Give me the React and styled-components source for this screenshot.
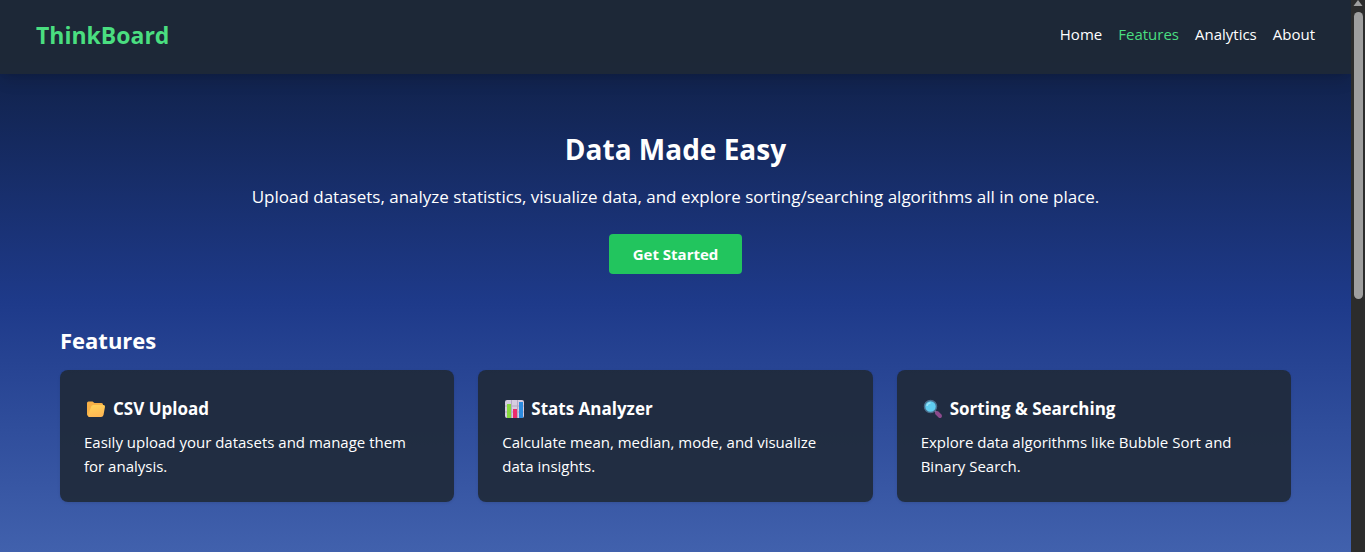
import React from "react";
import styled, { createGlobalStyle } from "styled-components";

const GlobalStyle = createGlobalStyle`
  *, *::before, *::after { box-sizing: border-box; }
  html, body { margin: 0; height: 100%; overflow: hidden; }
  #root { height: 100%; }
  body {
    font-family: "Segoe UI", "Open Sans", "Noto Sans", sans-serif;
    font-size: 15px;
    line-height: 24px;
    color: #ffffff;
  }
  h1, h2, h3, p { margin: 0; }
`;

const Shell = styled.div`
  display: grid;
  grid-template-columns: minmax(0, 1fr) 14px;
  height: 100vh;
`;

const Page = styled.div`
  display: flex;
  flex-direction: column;
  overflow: hidden;
  background: linear-gradient(to bottom, #0d1b39 0%, #1e3a8a 55%, #4161ad 100%);
`;

const Header = styled.header`
  display: flex;
  align-items: flex-start;
  justify-content: space-between;
  padding: 16px 36px 20px;
  background: #1f2937f2;
  box-shadow: 0 10px 15px -3px #0000001a, 0 4px 6px -4px #0000001a;
`;

const Logo = styled.div`
  font-size: 23px;
  line-height: 38px;
  font-weight: 700;
  color: #4ade80;
`;

const Nav = styled.nav`
  display: flex;
  gap: 16px;
  line-height: 36px;
`;

const NavLink = styled.a`
  color: ${({ $active }) => ($active ? "#4ade80" : "#ffffff")};
  text-decoration: none;
`;

const Main = styled.main`
  padding: 56px 60px 48px;
`;

const Hero = styled.section`
  display: flex;
  flex-direction: column;
  align-items: center;
  text-align: center;
  margin-bottom: 48px;
`;

const HeroTitle = styled.h1`
  font-size: 28px;
  line-height: 38px;
  font-weight: 700;
  margin-bottom: 14px;
`;

const HeroText = styled.p`
  font-size: 17px;
  line-height: 30px;
  margin-bottom: 22px;
`;

const PrimaryButton = styled.button`
  border: 0;
  border-radius: 4px;
  padding: 8px 24px;
  background: #22c55e;
  color: #ffffff;
  font: inherit;
  font-weight: 700;
  cursor: pointer;
`;

const SectionTitle = styled.h2`
  font-size: 22px;
  line-height: 36px;
  font-weight: 700;
  margin-bottom: 12px;
`;

const CardGrid = styled.div`
  display: grid;
  grid-template-columns: repeat(3, minmax(0, 1fr));
  gap: 24px;
`;

const Card = styled.article`
  padding: 24px;
  border-radius: 8px;
  background: #1f2937e6;
  box-shadow: 0 1px 3px #0000001a;
`;

const CardTitle = styled.h3`
  display: flex;
  align-items: center;
  gap: 5px;
  font-size: 17px;
  line-height: 30px;
  font-weight: 700;
  margin-bottom: 6px;
`;

const CardText = styled.p`
  max-width: 336px;
`;

const Icon = styled.svg`
  flex: none;
  width: 24px;
  height: 24px;
`;

const Scrollbar = styled.div`
  display: flex;
  flex-direction: column;
  align-items: center;
  background: #2c2c2c;
`;

const ScrollArrow = styled.svg`
  width: 10px;
  height: 6px;
  margin-bottom: 6px;
`;

const ScrollThumb = styled.div`
  width: 9px;
  height: 52%;
  border-radius: 5px;
  background: #9f9f9f;
`;

const FolderIcon = () => (
  <Icon viewBox="0 0 24 24" aria-hidden="true">
    <defs>
      <linearGradient id="folder" x1="0" y1="0" x2="0.3" y2="1">
        <stop offset="0" stopColor="#ffd45a" />
        <stop offset="1" stopColor="#ffb854" />
      </linearGradient>
    </defs>
    <path d="M3 6Q3 4.500 4.500 4.500H8.500L10.500 6H17.500Q19 6 19 7.500V19H5Q3 19 3 17.500Z" fill="#f7b046" />
    <path d="M7 10Q7.500 8 9.500 8H19.500Q21.300 8 21 9.800L19.500 18Q19 20 17 20H5Q3.500 20 4.200 18Z" fill="url(#folder)" />
  </Icon>
);

const ChartIcon = () => (
  <Icon viewBox="0 0 24 24" aria-hidden="true">
    <rect x="3" y="3" width="19" height="18" rx="2" fill="#d6cde0" />
    <path d="M3 9H22M3 15H22M9.500 3V21M15.500 3V21" stroke="#b5a9c3" strokeWidth="1" />
    <rect x="5" y="7" width="4" height="14" fill="#86d83e" />
    <rect x="11" y="12" width="4" height="9" fill="#ec2c6b" />
    <rect x="17" y="5" width="4" height="16" fill="#2d8ce0" />
  </Icon>
);

const SearchIcon = () => (
  <Icon viewBox="0 0 24 24" aria-hidden="true">
    <path d="M14 14L16 16" stroke="#8a7a9a" strokeWidth="2" />
    <path d="M16 16L19 19" stroke="#8c4a8c" strokeWidth="4" strokeLinecap="round" />
    <circle cx="9.500" cy="9.500" r="6" fill="#5fcdf0" stroke="#4b6f8d" strokeWidth="1.500" />
    <path d="M6 9Q6.500 6 9.500 6" stroke="#9ae4fa" strokeWidth="1.500" fill="none" />
  </Icon>
);

const links = ["Home", "Features", "Analytics", "About"];

const features = [
  { title: "CSV Upload", icon: FolderIcon, text: "Easily upload your datasets and manage them for analysis." },
  { title: "Stats Analyzer", icon: ChartIcon, text: "Calculate mean, median, mode, and visualize data insights." },
  { title: "Sorting & Searching", icon: SearchIcon, text: "Explore data algorithms like Bubble Sort and Binary Search." },
];

export default function App() {
  return (
    <>
      <GlobalStyle />
      <Shell>
        <Page>
          <Header>
            <Logo>ThinkBoard</Logo>
            <Nav>
              {links.map((label) => (
                <NavLink key={label} href={`#${label.toLowerCase()}`} $active={label === "Features"}>
                  {label}
                </NavLink>
              ))}
            </Nav>
          </Header>
          <Main>
            <Hero>
              <HeroTitle>Data Made Easy</HeroTitle>
              <HeroText>
                Upload datasets, analyze statistics, visualize data, and explore sorting/searching algorithms all in one place.
              </HeroText>
              <PrimaryButton type="button">Get Started</PrimaryButton>
            </Hero>
            <section id="features">
              <SectionTitle>Features</SectionTitle>
              <CardGrid>
                {features.map(({ title, icon: FeatureIcon, text }) => (
                  <Card key={title}>
                    <CardTitle>
                      <FeatureIcon />
                      {title}
                    </CardTitle>
                    <CardText>{text}</CardText>
                  </Card>
                ))}
              </CardGrid>
            </section>
          </Main>
        </Page>
        <Scrollbar aria-hidden="true">
          <ScrollArrow viewBox="0 0 10 6">
            <path d="M5 0L9.500 6H0.500Z" fill="#9f9f9f" />
          </ScrollArrow>
          <ScrollThumb />
        </Scrollbar>
      </Shell>
    </>
  );
}
